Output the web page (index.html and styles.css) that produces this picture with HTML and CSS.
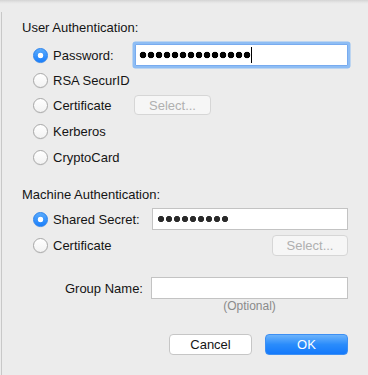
FILE: index.html
```html
<!DOCTYPE html>
<html>
<head>
<meta charset="utf-8">
<link rel="stylesheet" href="styles.css">
</head>
<body>
<div class="sheet">
  <div class="heading">User Authentication:</div>
  <div class="group user">
    <div class="row r1">
      <label class="choice"><span class="radio on"></span><span>Password:</span></label>
      <div class="field focus"><span class="dots big" style="width:112px"></span><span class="caret"></span></div>
    </div>
    <div class="row r2">
      <label class="choice"><span class="radio"></span><span>RSA SecurID</span></label>
    </div>
    <div class="row">
      <label class="choice"><span class="radio"></span><span>Certificate</span></label>
      <button class="btn disabled sel-user">Select...</button>
    </div>
    <div class="row">
      <label class="choice"><span class="radio"></span><span>Kerberos</span></label>
    </div>
    <div class="row">
      <label class="choice"><span class="radio"></span><span>CryptoCard</span></label>
    </div>
  </div>

  <div class="heading machine-h">Machine Authentication:</div>
  <div class="group machine">
    <div class="row">
      <label class="choice"><span class="radio on"></span><span>Shared Secret:</span></label>
      <div class="field"><span class="dots small" style="width:72px"></span></div>
    </div>
    <div class="row">
      <label class="choice"><span class="radio"></span><span>Certificate</span></label>
      <button class="btn disabled sel-machine">Select...</button>
    </div>
  </div>

  <div class="group-row">
    <span class="group-label">Group Name:</span>
    <div class="field"></div>
  </div>
  <div class="optional">(Optional)</div>

  <div class="actions">
    <button class="btn cancel">Cancel</button>
    <button class="btn ok">OK</button>
  </div>
</div>
</body>
</html>
```

FILE: styles.css
```css
* { box-sizing: border-box; }

html, body {
  margin: 0;
  padding: 0;
}

body {
  width: 368px;
  height: 375px;
  overflow: hidden;
  background: linear-gradient(#d4d4d4 0, #e3e3e3 2px, #ececec 4px, #ececec 100%);
  font-family: "Liberation Sans", Arial, sans-serif;
  font-size: 13px;
  color: #141414;
}

.sheet {
  margin-left: 1px;
  margin-top: 12px;
  height: 363px;
  border-left: 1px solid #c8c8c8;
  padding: 8px 20px 0 20px;
}

.heading {
  height: 16px;
  line-height: 16px;
  white-space: nowrap;
}

.machine-h {
  margin-top: 17px;
}

.user .r1 {
  margin-top: 6px;
}

.row {
  display: flex;
  align-items: center;
  height: 26px;
  padding-left: 11px;
}

.row.r2 {
  height: 24px;
}

.machine {
  margin-top: 3px;
}

.choice {
  display: flex;
  align-items: center;
  gap: 5px;
  flex: none;
  white-space: nowrap;
}

.user .choice { width: 101px; }
.machine .choice { width: 119px; }

.radio {
  width: 15px;
  height: 15px;
  border-radius: 50%;
  border: 1px solid #a8a8a8;
  background: linear-gradient(#ffffff, #f2f2f2);
  box-shadow: 0 0.5px 0.5px rgba(0,0,0,0.08);
  flex: none;
}

.radio.on {
  border-color: #2a82ee;
  background:
    radial-gradient(circle at 50% 50%, #ffffff 0, #ffffff 2.5px, rgba(255,255,255,0) 3.1px),
    linear-gradient(#5aabfc, #1b7ffb);
}

.field {
  flex: 1;
  height: 22px;
  background: #ffffff;
  border: 1px solid #c3c3c3;
  display: flex;
  align-items: center;
  padding-left: 4px;
}

.field.focus {
  margin-left: 1px;
  border: 1px solid #78abef;
  box-shadow: 0 0 0 2.5px #8ebdf4;
  border-radius: 1px;
  padding-left: 3px;
}

.dots {
  display: block;
  height: 8px;
  background-repeat: repeat-x;
  background-size: 8px 8px;
}

.dots.big {
  background-image: radial-gradient(circle at 4px 4px, #000000 0, #000000 3px, rgba(0,0,0,0) 3.6px);
}

.dots.small {
  background-image: radial-gradient(circle at 4px 4px, #2a2a2a 0, #2a2a2a 2.8px, rgba(0,0,0,0) 3.4px);
}

.caret {
  display: block;
  width: 1px;
  height: 16px;
  background: #000000;
}

.btn {
  font-family: "Liberation Sans", Arial, sans-serif;
  font-size: 13px;
  height: 21px;
  padding: 0;
  border-radius: 4px;
  line-height: 19px;
  text-align: center;
}

.btn.disabled {
  background: #f6f6f6;
  border: 1px solid #d6d6d6;
  color: #b0b0b0;
}

.sel-user {
  width: 77px;
  height: 20px;
}

.sel-machine {
  width: 76px;
  margin-left: auto;
}

.group-row {
  display: flex;
  align-items: center;
  height: 26px;
  margin-top: 17px;
  gap: 8px;
}

.group-label {
  width: 121px;
  text-align: right;
  flex: none;
}

.optional {
  margin-top: -1px;
  margin-left: 129px;
  text-align: center;
  font-size: 12px;
  line-height: 12px;
  height: 12px;
  color: #8a8a8a;
}

.actions {
  display: flex;
  justify-content: flex-end;
  gap: 13px;
  margin-top: 22px;
}

.cancel {
  width: 83px;
  background: #ffffff;
  border: 1px solid #c6c6c6;
  color: #141414;
}

.ok {
  width: 83px;
  background: linear-gradient(#6cb3fb, #2a8cfb 50%, #1479fb);
  border: 1px solid #3d8ff3;
  color: #ffffff;
}
```
